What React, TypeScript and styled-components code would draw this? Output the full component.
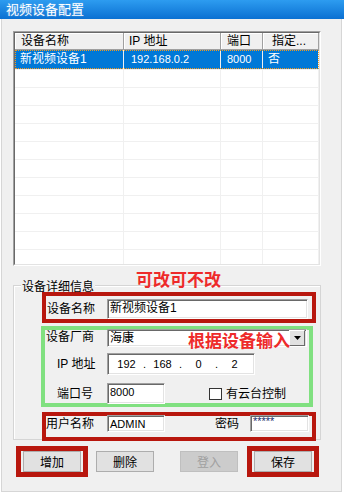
import React from 'react';
import styled, { createGlobalStyle } from 'styled-components';

const FONT = `"Liberation Sans", "Noto Sans CJK SC", sans-serif`;
const CJK = `"Noto Sans CJK SC", sans-serif`;
const RED = '#b8170e';
const GREEN = '#80e080';
const NOTE = '#ee2a2a';

const GlobalStyle = createGlobalStyle`
  html, body { margin: 0; padding: 0; background: #fff; }
  body { font-family: ${FONT}; font-size: 12px; color: #000; }
  * { box-sizing: border-box; }
`;

// column widths / text offsets measured from the dialog
const columns = [
  { title: '设备名称', width: 109, headPad: 6, pad: 5 },
  { title: 'IP 地址', width: 97, headPad: 5, pad: 7 },
  { title: '端口', width: 42, headPad: 6, pad: 6 },
  { title: '指定...', width: 56, headPad: 9, pad: 5 },
];
const selected = ['新视频设备1', '192.168.0.2', '8000', '否'];
const emptyRows = Array.from({ length: 11 }, (_, i) => i);
const ipParts = ['192', '168', '0', '2'];

const App = () => (
  <>
    <GlobalStyle />
    <Window>
      <TitleBar>视频设备配置</TitleBar>
      <Body>
        <ListView>
          <ListInner>
            <HeaderRow>
              {columns.map(c => (
                <HeaderCell key={c.title} $w={c.width} $pad={c.headPad}>{c.title}</HeaderCell>
              ))}
            </HeaderRow>
            <Row $selected>
              {columns.map((c, i) => (
                <Cell key={c.title} $w={c.width} $pad={c.pad}>
                  {i === 1 || i === 2 ? <Num>{selected[i]}</Num> : selected[i]}
                </Cell>
              ))}
            </Row>
            {emptyRows.map(r => (
              <Row key={r}>
                {columns.map(c => <Cell key={c.title} $w={c.width} $pad={c.pad} />)}
              </Row>
            ))}
          </ListInner>
        </ListView>

        <GroupBox>
          <GroupTitle>设备详细信息</GroupTitle>
          <Note $left={122} $top={-16}>可改可不改</Note>
          <Note $left={174} $top={45}>根据设备输入</Note>

          <Highlight $tone="red" $mt={-2} $ml={28} $w={274} $h={31}>
            <FormRow $mt={3}>
              <Label $w={61} $pl={1}>设备名称</Label>
              <Field $w={201} $h={20}>新视频设备1</Field>
            </FormRow>
          </Highlight>

          <Highlight $tone="green" $mt={3} $ml={27} $w={272} $h={81}>
            <FormRow $mt={-1}>
              <Label $w={62} $pl={1} $top>设备厂商</Label>
              <Combo $w={200} $h={18}>
                <span>海康</span>
                <DropButton>
                  <svg width="7" height="4" viewBox="0 0 7 4">
                    <polygon points="0,0 7,0 3.5,4" fill="#000" />
                  </svg>
                </DropButton>
              </Combo>
            </FormRow>
            <FormRow $mt={6}>
              <Label $w={62} $pl={12}>IP 地址</Label>
              <IpField $w={148} $h={22}>
                {ipParts.map((p, i) => (
                  <React.Fragment key={i}>
                    {i > 0 && <IpDot>.</IpDot>}
                    <IpPart>{p}</IpPart>
                  </React.Fragment>
                ))}
              </IpField>
            </FormRow>
            <FormRow $mt={8}>
              <Label $w={62} $pl={12}>端口号</Label>
              <Field $w={58} $h={21}><Num>8000</Num></Field>
              <CheckBox />
              <CheckLabel>有云台控制</CheckLabel>
            </FormRow>
          </Highlight>

          <Highlight $tone="red" $mt={5} $ml={28} $w={274} $h={29}>
            <FormRow $mt={-1}>
              <Label $w={61}>用户名称</Label>
              <Field $w={58} $h={17}><Num>ADMIN</Num></Field>
              <Label $w={24} $ml={50}>密码</Label>
              <Field $w={59} $h={17} $ml={11}><Secret>*****</Secret></Field>
            </FormRow>
          </Highlight>
        </GroupBox>

        <ButtonRow>
          <ButtonFrame>
            <Button>增加</Button>
          </ButtonFrame>
          <Button $ml={8}>删除</Button>
          <Button $ml={26} disabled>登入</Button>
          <ButtonFrame $ml={9}>
            <Button>保存</Button>
          </ButtonFrame>
        </ButtonRow>
      </Body>
    </Window>
  </>
);

export default App;

const Window = styled.div`
  width: 344px;
  height: 493px;
  display: flex;
  flex-direction: column;
`;

const TitleBar = styled.div`
  height: 19px;
  flex: none;
  padding-left: 6px;
  background: linear-gradient(#2d9cf0, #0b70d2);
  color: #fff;
  font-family: ${CJK};
  font-size: 13px;
  line-height: 18px;
  text-shadow: 0 0 2px rgba(255, 255, 255, 0.35);
`;

const Body = styled.div`
  margin-left: 1px;
  width: 341px;
  height: 473px;
  background: #f0f0f0;
  border: 1px solid #d6d6d6;
  border-top: none;
  display: flex;
  flex-direction: column;
`;

const ListView = styled.div`
  margin: 12px 0 0 11px;
  width: 308px;
  height: 235px;
  flex: none;
  border: 1px solid;
  border-color: #a0a0a0 #ffffff #ffffff #a0a0a0;
`;

const ListInner = styled.div`
  width: 100%;
  height: 100%;
  overflow: hidden;
  background: #fff;
  border: 1px solid;
  border-color: #696969 #e3e3e3 #e3e3e3 #696969;
`;

const HeaderRow = styled.div`
  display: flex;
  height: 17px;
`;

const HeaderCell = styled.div<{ $w: number; $pad: number }>`
  width: ${p => p.$w}px;
  flex: none;
  padding-left: ${p => p.$pad}px;
  line-height: 16px;
  background: #f0f0f0;
  border-right: 1px solid #a0a0a0;
  border-bottom: 1px solid #a0a0a0;
  box-shadow: inset 1px 1px 0 #fff;
  white-space: nowrap;
  overflow: hidden;
`;

const Row = styled.div<{ $selected?: boolean }>`
  display: flex;
  height: ${p => (p.$selected ? 19 : 18)}px;
  ${p =>
    p.$selected
      ? `background: #0078d7; color: #fff; outline: 1px dotted #f39a1e; outline-offset: -1px;`
      : `border-top: 1px solid #f0f0f0;`}
`;

const Cell = styled.div<{ $w: number; $pad: number }>`
  width: ${p => p.$w}px;
  flex: none;
  padding-left: ${p => p.$pad}px;
  line-height: 18px;
  border-right: 1px solid #f0f0f0;
  white-space: nowrap;
  overflow: hidden;
`;

const Num = styled.span`
  font-family: "Liberation Sans", sans-serif;
  font-size: 11px;
`;

const GroupBox = styled.div`
  position: relative;
  margin: 19px 0 0 11px;
  width: 308px;
  height: 155px;
  flex: none;
  border: 1px solid #d5d5d5;
  box-shadow: inset 1px 1px 0 #fff;
`;

const GroupTitle = styled.div`
  width: fit-content;
  margin: -9px 0 0 7px;
  padding: 0 1px;
  background: #f0f0f0;
  font-family: ${CJK};
  line-height: 17px;
`;

const Note = styled.div<{ $left: number; $top: number }>`
  position: absolute;
  left: ${p => p.$left}px;
  top: ${p => p.$top}px;
  z-index: 2;
  color: ${NOTE};
  font-family: ${CJK};
  font-size: 17px;
  font-weight: 700;
  line-height: 17px;
  white-space: nowrap;
`;

const Highlight = styled.div<{ $tone: 'red' | 'green'; $mt: number; $ml: number; $w: number; $h: number }>`
  width: ${p => p.$w}px;
  height: ${p => p.$h}px;
  margin: ${p => p.$mt}px 0 0 ${p => p.$ml}px;
  border: 4px solid ${p => (p.$tone === 'red' ? RED : GREEN)};
`;

const FormRow = styled.div<{ $mt?: number }>`
  display: flex;
  align-items: center;
  margin-top: ${p => p.$mt ?? 0}px;
`;

const Label = styled.div<{ $w: number; $pl?: number; $ml?: number; $top?: boolean }>`
  width: ${p => p.$w}px;
  flex: none;
  margin-left: ${p => p.$ml ?? 0}px;
  padding-left: ${p => p.$pl ?? 0}px;
  align-self: ${p => (p.$top ? 'flex-start' : 'center')};
  line-height: 16px;
  white-space: nowrap;
`;

const Field = styled.div<{ $w: number; $h: number; $ml?: number }>`
  width: ${p => p.$w}px;
  height: ${p => p.$h}px;
  flex: none;
  margin-left: ${p => p.$ml ?? 0}px;
  padding: 1px 0 0 2px;
  background: #fff;
  border: 1px solid;
  border-color: #a0a0a0 #ffffff #ffffff #a0a0a0;
  box-shadow: inset 1px 1px 0 #696969, inset -1px -1px 0 #e3e3e3;
  line-height: 15px;
  white-space: nowrap;
  overflow: hidden;
`;

const Combo = styled(Field)`
  display: flex;
  justify-content: space-between;
  align-items: flex-start;
  padding: 0 1px 0 2px;
  line-height: 16px;
`;

const DropButton = styled.div`
  width: 16px;
  height: 16px;
  display: flex;
  align-items: center;
  justify-content: center;
  background: #e1e1e1;
  border: 1px solid;
  border-color: #ffffff #696969 #696969 #ffffff;
`;

const IpField = styled(Field)`
  display: flex;
  align-items: center;
  padding: 0 0 0 5px;
  font-family: "Liberation Sans", sans-serif;
  font-size: 11px;
`;

const IpPart = styled.span`
  width: 27px;
  text-align: center;
`;

const IpDot = styled.span`
  width: 9px;
  text-align: center;
`;

const Secret = styled.span`
  font-family: "Liberation Sans", sans-serif;
  font-size: 11px;
  line-height: 8px;
  display: block;
  color: #1a2a6a;
`;

const CheckBox = styled.div`
  width: 13px;
  height: 12px;
  margin-left: 44px;
  background: #fff;
  border: 1px solid #333;
`;

const CheckLabel = styled.div`
  margin-left: 4px;
  line-height: 16px;
`;

const ButtonRow = styled.div`
  display: flex;
  align-items: center;
  margin-top: 6px;
  padding-left: 14px;
`;

const ButtonFrame = styled.div<{ $ml?: number }>`
  display: flex;
  align-items: center;
  margin-left: ${p => p.$ml ?? 0}px;
  padding: 0 2px;
  border: 5px solid ${RED};
`;

const Button = styled.button<{ $ml?: number }>`
  width: 58px;
  height: 21px;
  margin: 0 0 0 ${p => p.$ml ?? 0}px;
  padding: 0;
  background: #e1e1e1;
  border: 1px solid #adadad;
  color: #000;
  font-family: ${CJK};
  font-size: 12px;
  line-height: 19px;
  &:disabled {
    background: #cccccc;
    border-color: #bfbfbf;
    color: #a0a0a0;
  }
`;
